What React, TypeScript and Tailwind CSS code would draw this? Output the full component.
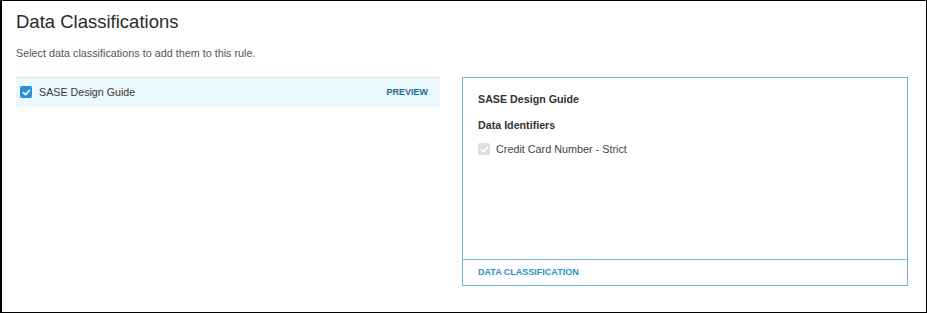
import React from 'react';

function CheckIcon({ className }: { className?: string }) {
  return (
    <svg viewBox="0 0 12 12" className={className} fill="none">
      <path d="M2.6 6.2 L4.9 8.4 L9.4 3.6" stroke="white" strokeWidth="1.7" strokeLinecap="round" strokeLinejoin="round" />
    </svg>
  );
}

export default function App() {
  return (
    <div
      className="w-[927px] h-[313px] bg-white border border-l-2 border-black text-[#333]"
      style={{ fontFamily: '"Liberation Sans", Arial, sans-serif' }}
    >
      {/* 标题 */}
      <div className="pl-[14px] pt-[9px]">
        <h1 className="text-[18.5px] leading-[24px] font-normal text-[#2b2b2b]">Data Classifications</h1>
        <p className="mt-[11px] text-[10.8px] leading-[16px] text-[#555]">
          Select data classifications to add them to this rule.
        </p>
      </div>

      <div className="flex pl-[14px] pt-[16px] gap-[22px]">
        {/* 左侧列表 */}
        <div className="w-[424px]">
          <div className="h-[30px] flex items-center justify-between bg-[#ebf8fd] border-t border-[#dfe6ea] pl-[4px] pr-[12px]">
            <div className="flex items-center gap-[7px]">
              <span className="w-[12px] h-[12px] rounded-[2px] bg-[#2d8fd5] flex items-center justify-center">
                <CheckIcon className="w-[11px] h-[11px]" />
              </span>
              <span className="text-[10.7px] text-[#3a3a3a]">SASE Design Guide</span>
            </div>
            <span className="text-[9px] font-bold text-[#1c6c96]">PREVIEW</span>
          </div>
        </div>

        {/* 右侧预览 */}
        <div className="w-[446px] h-[209px] border border-[#6fb9dd] flex flex-col">
          <div className="flex-1 px-[15px] pt-[13px]">
            <div className="text-[10.7px] font-bold text-[#333]">SASE Design Guide</div>
            <div className="mt-[10px] text-[10.7px] font-bold text-[#333]">Data Identifiers</div>
            <div className="mt-[8px] flex items-center gap-[6px]">
              <span className="w-[12px] h-[12px] rounded-[2px] bg-[#dedede] flex items-center justify-center">
                <CheckIcon className="w-[11px] h-[11px]" />
              </span>
              <span className="text-[10.8px] text-[#444]">Credit Card Number - Strict</span>
            </div>
          </div>
          <div className="h-[26px] border-t border-[#6fb9dd] px-[15px] flex items-center">
            <span className="text-[9px] font-bold text-[#2a8fcf]">DATA CLASSIFICATION</span>
          </div>
        </div>
      </div>
    </div>
  );
}
